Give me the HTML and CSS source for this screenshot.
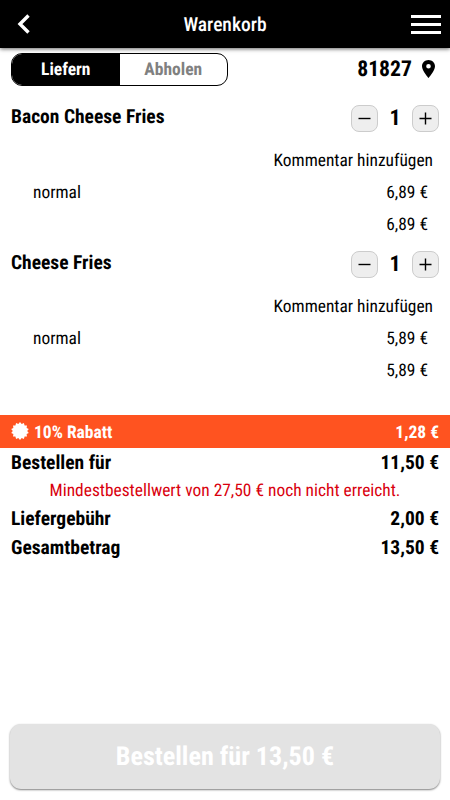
FILE: index.html
```
<!doctype html>
<html lang="de">
<head>
<meta charset="utf-8">
<meta name="viewport" content="width=device-width, initial-scale=1.0">
<link rel="stylesheet" href="styles.css">
<title>Warenkorb</title>
</head>
<body>
<header class="topbar">
	<svg class="back" width="14" height="20" viewBox="0 0 14 20"><path d="M11.500 1.500L3 10l8.500 8.500" fill="none" stroke="#fff" stroke-width="3.400"/></svg>
	<h1>Warenkorb</h1>
	<div class="menu"><span></span><span></span><span></span></div>
</header>

<div class="delivery">
	<div class="switch">
		<span class="active">Liefern</span>
		<span>Abholen</span>
	</div>
	<div class="zip">81827
		<svg width="13" height="18" viewBox="5 2 14 20" preserveAspectRatio="none"><path d="M12 2C8.130 2 5 5.130 5 9c0 5.250 7 13 7 13s7-7.750 7-13c0-3.870-3.130-7-7-7zm0 9.500a2.500 2.500 0 0 1 0-5 2.500 2.500 0 0 1 0 5z"/></svg>
	</div>
</div>

<main>
	<section class="item">
		<div class="item-head">
			<h2>Bacon Cheese Fries</h2>
			<div class="amount">
				<button><svg width="13" height="13" viewBox="0 0 13 13"><path d="M.5 6.500h12"/></svg></button>
				<b>1</b>
				<button><svg width="13" height="13" viewBox="0 0 13 13"><path d="M.5 6.500h12M6.500.5v12"/></svg></button>
			</div>
		</div>
		<p class="comment">Kommentar hinzufügen</p>
		<p class="price"><span>normal</span><span>6,89 €</span></p>
		<p class="price"><span></span><span>6,89 €</span></p>
	</section>
	<section class="item">
		<div class="item-head">
			<h2>Cheese Fries</h2>
			<div class="amount">
				<button><svg width="13" height="13" viewBox="0 0 13 13"><path d="M.5 6.500h12"/></svg></button>
				<b>1</b>
				<button><svg width="13" height="13" viewBox="0 0 13 13"><path d="M.5 6.500h12M6.500.5v12"/></svg></button>
			</div>
		</div>
		<p class="comment">Kommentar hinzufügen</p>
		<p class="price"><span>normal</span><span>5,89 €</span></p>
		<p class="price"><span></span><span>5,89 €</span></p>
	</section>
</main>

<div class="discount">
	<svg width="18" height="18" viewBox="-9 -9 18 18"><path fill="#fff" d="M0-9L1.700-6.900 3.900-8.100 4.600-5.500 7-5.600 6.600-3.100 8.800-2 7.200 0 8.800 2 6.600 3.100 7 5.600 4.600 5.500 3.900 8.100 1.700 6.900 0 9-1.700 6.900-3.900 8.100-4.600 5.500-7 5.600-6.600 3.100-8.800 2-7.200 0-8.800-2-6.600-3.100-7-5.600-4.600-5.500-3.900-8.100-1.700-6.900z"/></svg>
	<span>10% Rabatt</span>
	<span class="value">1,28 €</span>
</div>

<div class="totals">
	<p><span>Bestellen für</span><span>11,50 €</span></p>
	<p class="warning">Mindestbestellwert von 27,50 € noch nicht erreicht.</p>
	<p><span>Liefergebühr</span><span>2,00 €</span></p>
	<p><span>Gesamtbetrag</span><span>13,50 €</span></p>
</div>

<button class="order">Bestellen für 13,50 €</button>
</body>
</html>
```

FILE: styles.css
```
* {
	box-sizing: border-box;
}
h1,
h2,
p {
	margin: 0;
	font-weight: normal;
}
body {
	display: flex;
	flex-direction: column;
	height: 800px;
	margin: 0;
	font-family: Roboto, "Liberation Sans", sans-serif;
	font-stretch: 75%;
	font-size: 17.4px;
	text-rendering: geometricPrecision;
	color: #000;
	background: #fff;
}
button {
	font: inherit;
	font-stretch: 75%;
	padding: 0;
	text-rendering: inherit;
}
.topbar {
	display: grid;
	grid-template-columns: 30px 1fr 30px;
	align-items: center;
	height: 48px;
	padding: 0 9px 0 17px;
	background: #000;
	box-shadow: 0 1px 4px rgba(0, 0, 0, 0.6);
}
.topbar h1 {
	padding-right: 8px;
	font-size: 19.5px;
	font-weight: 500;
	text-align: center;
	color: #fff;
}
.menu {
	display: flex;
	flex-direction: column;
	gap: 5px;
}
.menu span {
	height: 3px;
	background: #fff;
}
.delivery {
	display: flex;
	justify-content: space-between;
	align-items: center;
	height: 33px;
	margin-top: 5px;
	padding: 0 15px 0 11px;
}
.switch {
	display: flex;
	width: 217px;
	height: 33px;
	border: 1px solid #000;
	border-radius: 11px;
	overflow: hidden;
	font-weight: bold;
	font-size: 17.5px;
	color: #808080;
}
.switch span {
	flex: 1;
	line-height: 33px;
	text-align: center;
}
.switch .active {
	color: #fff;
	background: #000;
}
.zip {
	display: flex;
	align-items: center;
	gap: 10px;
	font-size: 21.7px;
	font-weight: bold;
}
.zip svg {
	margin-bottom: 2px;
}
main {
	height: 329px;
	padding-top: 15px;
}
.item {
	height: 146px;
}
.item-head {
	display: flex;
	justify-content: space-between;
	height: 34px;
	padding: 0 11px;
}
.item-head h2 {
	font-size: 19.5px;
	font-weight: bold;
	line-height: 32px;
}
.amount {
	display: flex;
	align-items: center;
	gap: 11px;
}
.amount b {
	width: 12px;
	font-size: 22px;
	text-align: center;
}
.amount button {
	display: flex;
	align-items: center;
	justify-content: center;
	width: 27px;
	height: 27px;
	border: 1px solid #ccc;
	border-radius: 8px;
	background: #eee;
}
.amount path {
	fill: none;
	stroke: #000;
	stroke-width: 1.4;
}
.comment {
	margin-top: 10px;
	padding-right: 17px;
	line-height: 32px;
	text-align: right;
}
.price {
	display: flex;
	justify-content: space-between;
	padding: 0 22px 0 33px;
	line-height: 32px;
}
.discount {
	display: flex;
	align-items: center;
	height: 33px;
	padding: 0 11px;
	font-size: 17.5px;
	font-weight: bold;
	color: #fff;
	background: #ff5320;
}
.discount span {
	padding-top: 2px;
}
.discount svg {
	margin: 0 5px 1px 0;
}
.discount .value {
	margin-left: auto;
}
.totals {
	font-size: 19.5px;
	font-weight: bold;
}
.totals p {
	display: flex;
	justify-content: space-between;
	padding: 0 11px;
	font-weight: bold;
	line-height: 29px;
}
.totals .warning {
	justify-content: center;
	height: 27px;
	font-size: 17.4px;
	font-weight: normal;
	line-height: 29px;
	color: #d9000d;
}
.order {
	height: 65px;
	margin: auto 10px 11px;
	border: 0;
	border-radius: 11px;
	font-size: 26.1px;
	font-weight: bold;
	color: #fff;
	background: #e3e3e3;
	box-shadow: 0 1px 2px rgba(0, 0, 0, 0.5);
}
```
